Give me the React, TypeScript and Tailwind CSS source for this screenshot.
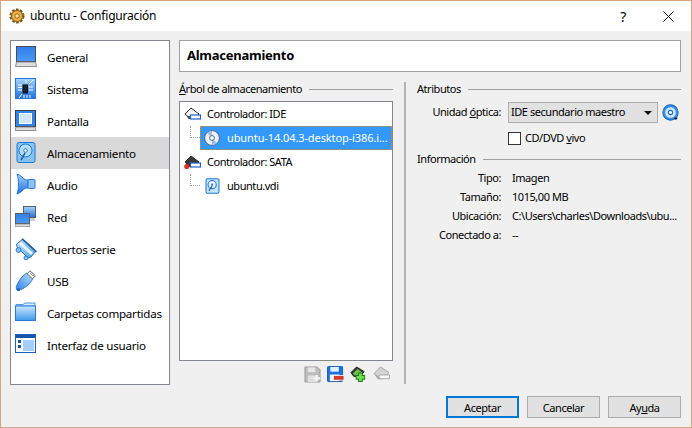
import type { ReactNode } from "react";

const FONT = "font-['Noto_Sans','Open_Sans',sans-serif]";

function Defs() {
  return (
    <svg width="0" height="0" className="absolute">
      <defs>
        <linearGradient id="blue" x1="0" y1="0" x2="0" y2="1">
          <stop offset="0" stopColor="#a6d4fa" />
          <stop offset="1" stopColor="#1f6fdc" />
        </linearGradient>
        <linearGradient id="screen" x1="0" y1="0" x2="0" y2="1">
          <stop offset="0" stopColor="#2f7fe8" />
          <stop offset="1" stopColor="#4a9af4" />
        </linearGradient>
        <linearGradient id="folder" x1="0" y1="0" x2="0" y2="1">
          <stop offset="0" stopColor="#cbe8fc" />
          <stop offset="1" stopColor="#3f97ea" />
        </linearGradient>
        <linearGradient id="usb" x1="0" y1="1" x2="1" y2="0">
          <stop offset="0" stopColor="#2a80e4" />
          <stop offset="1" stopColor="#bfe2fb" />
        </linearGradient>
        <linearGradient id="ctrl" x1="0" y1="0" x2="1" y2="1">
          <stop offset="0" stopColor="#cde8fc" />
          <stop offset="1" stopColor="#4a9ff0" />
        </linearGradient>
      </defs>
    </svg>
  );
}

function Icon({ children }: { children: ReactNode }) {
  return (
    <svg width="22" height="22" viewBox="0 0 22 22" className="shrink-0">
      {children}
    </svg>
  );
}

const GeneralIcon = () => (
  <Icon>
    <rect x="1.5" y="0.5" width="19" height="15" fill="url(#screen)" stroke="#4a4e58" />
    <path d="M1.5 16h19l1 4.5H.5z" fill="#dedede" stroke="#7a7a7a" strokeWidth="0.8" />
  </Icon>
);

const SistemaIcon = () => (
  <Icon>
    <rect x="0.5" y="0.5" width="20" height="20" fill="url(#blue)" stroke="#2a78d8" />
    <rect x="8" y="7" width="4.5" height="8" fill="#1c2630" stroke="#0a0f18" />
    <path
      d="M3 7h4M3 9.5h4M3 12h4M14 9h4M14 12h4M14 6l4-4M9 17v3M12 17v3M15 17v3M7 16l-3 4M11 5V2"
      stroke="#fff"
      strokeWidth="1"
    />
  </Icon>
);

const PantallaIcon = () => (
  <Icon>
    <rect x="0.5" y="0.5" width="20" height="16" fill="#3384ea" stroke="#3a3e48" />
    <rect x="4.5" y="3.5" width="12" height="10" fill="#cfe6fb" stroke="#fff" />
    <path d="M1 17h19l1 3.5H0z" fill="#dcdcdc" stroke="#7a7a7a" strokeWidth="0.8" />
  </Icon>
);

const DiskIcon = () => (
  <Icon>
    <rect x="2" y="0.5" width="18" height="20" rx="2" fill="#86c3f2" stroke="#1d7ad6" />
    <circle cx="10.5" cy="8.5" r="6.5" fill="#b6dcf8" stroke="#1d7ad6" />
    <circle cx="10.5" cy="8.5" r="1.8" fill="#fff" stroke="#1d7ad6" />
    <path d="M10 11l-4 7" stroke="#1d5fae" strokeWidth="1.6" />
  </Icon>
);

const AudioIcon = () => (
  <Icon>
    <path d="M2 0c4 1 6 5 9 6h2v8h-2c-3 1-5 5-9 6 2-6 2-14 0-20z" fill="url(#blue)" stroke="#2a78d8" />
    <rect x="13" y="5.5" width="7" height="9" rx="1" fill="#8cc4f8" stroke="#2a78d8" />
  </Icon>
);

const RedIcon = () => (
  <Icon>
    <rect x="8.5" y="0.5" width="12" height="11" fill="url(#blue)" stroke="#5a5e68" />
    <path d="M10 12h10v3H10z" fill="#d0d0d0" />
    <rect x="0.5" y="7.5" width="14" height="10" fill="url(#screen)" stroke="#5a5e68" />
    <path d="M.5 18h14l.5 2.5H0z" fill="#dcdcdc" stroke="#777" strokeWidth="0.6" />
  </Icon>
);

const SerieIcon = () => (
  <Icon>
    <path d="M8 1l13 12-5 6-3 1L2 9 1.5 6z" fill="url(#ctrl)" stroke="#3f6f9f" />
    <path d="M5 5l12 11" stroke="#e6f4ff" strokeWidth="3" />
    <path d="M7 0.8l14.5 13" stroke="#2d5f98" strokeWidth="1.6" />
    <circle cx="3.5" cy="12" r="2.4" fill="#8cc4f8" stroke="#2a78d8" />
    <circle cx="11" cy="20" r="2" fill="#8cc4f8" stroke="#2a78d8" />
  </Icon>
);

const UsbIcon = () => (
  <Icon>
    <path d="M12 3l6 5c-1 3-5 8-11 11-2 1-4 2-5 1s-1-3 0-5c2-5 6-10 10-12z" fill="url(#usb)" stroke="#2a78d8" />
    <path d="M15 0.8l5.5 5-3 3-5.5-5z" fill="#f6f6f6" stroke="#6a6a6a" />
    <path d="M15.5 3.5l1 1M17.5 5l1 1" stroke="#555" />
    <circle cx="3.5" cy="19.5" r="1.5" fill="#1f5fb8" />
  </Icon>
);

const FolderIcon = () => (
  <Icon>
    <path d="M1 4V2.5h7L10 1h10v3z" fill="#d6ecfb" stroke="#4a9be0" />
    <rect x="0.5" y="4" width="20" height="14.5" fill="url(#folder)" stroke="#2a78d8" />
  </Icon>
);

const InterfazIcon = () => (
  <Icon>
    <rect x="0.5" y="0.5" width="20" height="18" fill="#fff" stroke="#2060b8" />
    <rect x="1" y="1" width="19" height="3" fill="#1454ad" />
    <rect x="3" y="6" width="3" height="3" fill="#1454ad" />
    <rect x="3" y="11" width="3" height="3" fill="#1454ad" />
    <rect x="8" y="6" width="11" height="11" fill="#a6cdfb" />
  </Icon>
);

const CdIcon = () => (
  <svg width="16" height="16" viewBox="0 0 16 16" className="shrink-0">
    <circle cx="8" cy="8" r="7.4" fill="#eef2f6" stroke="#4f6a88" />
    <path d="M8 8L3 3a7 7 0 0 1 5-2zM8 8l5 5a7 7 0 0 1-5 2z" fill="#9dbfe2" />
    <circle cx="8" cy="8" r="2.4" fill="#fff" stroke="#4f6a88" />
  </svg>
);

const ControllerIcon = ({ sata = false }: { sata?: boolean }) => (
  <svg width="17" height="15" viewBox="0 0 17 15" className="shrink-0">
    <path d="M1 7l6-6 8 6-3 3H4z" fill={sata ? "#3a3a3a" : "#f4f4f4"} stroke="#2a2a2a" />
    <path d="M1 7l3.5 5H9V9H4z" fill={sata ? "#222" : "#555"} />
    {sata && <circle cx="2.8" cy="11.5" r="2.6" fill="#e03020" />}
    <rect x="6.5" y="8" width="10" height="4" fill="#fff" stroke="#1464c8" strokeWidth="1.2" />
  </svg>
);

const ToolIconAddDisk = () => (
  <svg width="17" height="17" viewBox="0 0 18 18" className="shrink-0">
    <path d="M1 1h13l3 3v13H1z" fill="#bcbcbc" stroke="#9a9a9a" />
    <rect x="4" y="1.5" width="8" height="5" fill="#e6e6e6" />
    <rect x="4" y="10" width="9" height="7" fill="#dedede" />
    <path d="M10 13h7M13.5 9.5v7" stroke="#f4f4f4" strokeWidth="2.4" />
  </svg>
);

const ToolIconRemDisk = () => (
  <svg width="17" height="17" viewBox="0 0 18 18" className="shrink-0">
    <rect x="0.5" y="0.5" width="16" height="16" rx="1" fill="#1f6fdc" stroke="#135bb8" />
    <rect x="3.5" y="1" width="9" height="5" fill="#dff0ff" />
    <rect x="3" y="9" width="10" height="7" fill="#eef6ff" />
    <rect x="7" y="10" width="11" height="5" fill="#d83a2a" stroke="#fff" strokeWidth="0.8" />
  </svg>
);

const ToolIconAddCtrl = () => (
  <svg width="17" height="17" viewBox="0 0 18 18" className="shrink-0">
    <path d="M1 7l6-6 8 5-4 5H4z" fill="#2f2f2f" stroke="#222" />
    <path d="M3 8l5-5 5 4-3 3H5z" fill="#6bc04b" />
    <path d="M6 12h10M11 7v10" stroke="#1e7a1e" strokeWidth="5" />
    <path d="M7 12h8M11 8v8" stroke="#6ee04a" strokeWidth="3" />
  </svg>
);

const ToolIconRemCtrl = () => (
  <svg width="17" height="17" viewBox="0 0 18 18" className="shrink-0">
    <path d="M1 8l7-7 9 6-4 4H5z" fill="#d4d4d4" stroke="#a0a0a0" />
    <path d="M1 8l4 6h5v-3H5z" fill="#aaa" />
    <rect x="6.5" y="9.5" width="11" height="4" fill="#f6f6f6" stroke="#a8a8a8" />
  </svg>
);

const NAV = [
  { label: "General", icon: <GeneralIcon /> },
  { label: "Sistema", icon: <SistemaIcon /> },
  { label: "Pantalla", icon: <PantallaIcon /> },
  { label: "Almacenamiento", icon: <DiskIcon />, active: true },
  { label: "Audio", icon: <AudioIcon /> },
  { label: "Red", icon: <RedIcon /> },
  { label: "Puertos serie", icon: <SerieIcon /> },
  { label: "USB", icon: <UsbIcon /> },
  { label: "Carpetas compartidas", icon: <FolderIcon /> },
  { label: "Interfaz de usuario", icon: <InterfazIcon /> },
];

const INFO = [
  ["Tipo:", "Imagen"],
  ["Tamaño:", "1015,00 MB"],
  ["Ubicación:", "C:\\Users\\charles\\Downloads\\ubu..."],
  ["Conectado a:", "--"],
];

function GroupTitle({ children }: { children: ReactNode }) {
  return (
    <div className="flex items-center gap-[7px] h-4">
      <span className="whitespace-nowrap">{children}</span>
      <div className="flex-1 h-px bg-[#a0a0a0]" />
    </div>
  );
}

function DialogButton({ children, primary = false }: { children: ReactNode; primary?: boolean }) {
  return (
    <button
      className={
        primary
          ? "w-[73px] h-[22px] bg-[#e1e1e1] border-2 border-[#0078d7] leading-none"
          : "w-[73px] h-[22px] bg-[#e1e1e1] border border-[#adadad] leading-none"
      }
    >
      {children}
    </button>
  );
}

export default function App() {
  return (
    <div
      className={`${FONT} w-[692px] h-[428px] flex flex-col bg-[#f0f0f0] border border-[#dba27e] text-[11px] text-black overflow-hidden tracking-[-0.45px]`}
    >
      <Defs />
      <header className="h-[30px] shrink-0 bg-white flex items-center pl-[8px] pr-[15px]">
        <svg width="16" height="16" viewBox="0 0 16 16" className="shrink-0">
          <circle cx="8" cy="8" r="6" fill="#e0a030" stroke="#7a5518" strokeWidth="3" strokeDasharray="2.4 1.4" />
          <circle cx="8" cy="8" r="5.5" fill="#eeb040" stroke="#8a6020" />
          <circle cx="8" cy="8" r="2.2" fill="#fbe6a8" stroke="#8a6020" />
        </svg>
        <span className="ml-[5px] text-[12px] tracking-[-0.2px]">ubuntu - Configuración</span>
        <span className="ml-auto text-[14px] mr-[37px]">?</span>
        <svg width="11" height="11" viewBox="0 0 11 11" className="mr-[2px]">
          <path d="M0.5 0.5l10 10M10.5 0.5l-10 10" stroke="#111" fill="none" />
        </svg>
      </header>

      <main className="flex-1 flex gap-[9px] pl-[9px] pr-[10px] pt-[9px] min-h-0">
        <nav className="w-[160px] h-[345px] shrink-0 bg-white border border-[#828790]">
          {NAV.map((item) => (
            <div
              key={item.label}
              className={`h-[32px] flex items-center gap-[10px] pl-[4px] whitespace-nowrap text-[11.6px] tracking-[-0.25px] ${item.active ? "bg-[#d9d9d9]" : ""}`}
            >
              {item.icon}
              <span className="pt-[2px]">{item.label}</span>
            </div>
          ))}
        </nav>

        <section className="flex-1 flex flex-col min-w-0">
          <div className="h-[32px] shrink-0 bg-white border border-[#a0a0a0] flex items-center pl-[7px] font-bold text-[13px] tracking-[-0.25px]">
            Almacenamiento
          </div>
          <div className="flex mt-[9px]">
            <div className="w-[214px] shrink-0 flex flex-col">
              <GroupTitle>
                <span className="underline">Á</span>rbol de almacenamiento
              </GroupTitle>
              <div className="h-[260px] mt-[4px] bg-white border border-[#828790]">
                <div className="h-[24px] flex items-center pl-[4px] gap-[6px]">
                  <ControllerIcon />
                  <span>Controlador: IDE</span>
                </div>
                <div className="h-[24px] flex items-center pl-[10px]">
                  <div className="w-[10px] h-[12px] mb-[12px] border-l border-b border-dotted border-[#999]" />
                  <div className="flex-1 h-[24px] bg-[#3399ff] text-white flex items-center pl-[3px] gap-[7px] border border-dotted border-[#e08a30] tracking-[-0.1px]">
                    <CdIcon />
                    <span className="whitespace-nowrap">ubuntu-14.04.3-desktop-i386.i...</span>
                  </div>
                </div>
                <div className="h-[24px] flex items-center pl-[4px] gap-[6px]">
                  <ControllerIcon sata />
                  <span>Controlador: SATA</span>
                </div>
                <div className="h-[24px] flex items-center pl-[10px]">
                  <div className="w-[10px] h-[12px] mb-[12px] border-l border-b border-dotted border-[#999]" />
                  <div className="flex items-center pl-[5px] gap-[7px]">
                    <svg width="15" height="16" viewBox="0 0 22 22">
                      <rect x="1.5" y="0.5" width="19" height="21" rx="2" fill="#c6e2f8" stroke="#1d7ad6" strokeWidth="1.5" />
                      <circle cx="10.5" cy="9" r="6" fill="#e6f3fd" stroke="#1d7ad6" strokeWidth="1.5" />
                      <circle cx="10.5" cy="9" r="1.6" fill="#1d7ad6" />
                      <path d="M10 11l-4 7" stroke="#1d5fae" strokeWidth="2" />
                    </svg>
                    <span>ubuntu.vdi</span>
                  </div>
                </div>
              </div>
              <div className="flex justify-end items-center gap-[6px] h-[17px] mt-[5px] pr-[3px]">
                <ToolIconAddDisk />
                <ToolIconRemDisk />
                <ToolIconAddCtrl />
                <ToolIconRemCtrl />
              </div>
            </div>

            <div className="w-[2px] h-[302px] shrink-0 ml-[11px] mt-[1px] bg-[#b4b4b4]" />

            <div className="flex-1 pl-[11px] min-w-0">
              <GroupTitle>Atributos</GroupTitle>
              <div className="flex items-center mt-[5px] h-[21px]">
                <span className="w-[84px] shrink-0 text-right whitespace-nowrap">
                  Unidad <span className="underline">ó</span>ptica:
                </span>
                <div className="ml-[7px] w-[150px] h-[21px] shrink-0 bg-[#e1e1e1] border border-[#adadad] flex items-center pl-[2px] pr-[5px] justify-between">
                  <span className="whitespace-nowrap">IDE secundario maestro</span>
                  <svg width="8" height="4" viewBox="0 0 8 4">
                    <path d="M0 0h8L4 4z" fill="#111" />
                  </svg>
                </div>
                <div className="ml-[4px] relative">
                  <svg width="17" height="17" viewBox="0 0 16 16" className="shrink-0">
                    <circle cx="8" cy="8" r="7.2" fill="#3a92e4" stroke="#1f6cc0" />
                    <circle cx="8" cy="8" r="5" fill="#cfe6fb" />
                    <circle cx="8" cy="8" r="2" fill="#fff" stroke="#1f6cc0" />
                    <path d="M11 13h4l-2 2z" fill="#111" />
                  </svg>
                </div>
              </div>
              <div className="flex items-center mt-[9px] ml-[91px] h-[12px]">
                <div className="w-[13px] h-[13px] shrink-0 bg-white border border-[#333]" />
                <span className="ml-[4px]">
                  CD/DVD <span className="underline">v</span>ivo
                </span>
              </div>
              <div className="mt-[7px]">
                <GroupTitle>Información</GroupTitle>
              </div>
              <div className="mt-[2px] flex flex-col">
                {INFO.map(([label, value]) => (
                  <div key={label} className="h-[19px] flex items-center">
                    <span className="w-[84px] shrink-0 text-right whitespace-nowrap">{label}</span>
                    <span className="ml-[11px] whitespace-nowrap">{value}</span>
                  </div>
                ))}
              </div>
            </div>
          </div>
        </section>
      </main>

      <footer className="h-[42px] shrink-0 flex justify-end items-start gap-[8px] pr-[10px] pt-[11px]">
        <DialogButton primary>Aceptar</DialogButton>
        <DialogButton>Cancelar</DialogButton>
        <DialogButton>
          Ay<span className="underline">u</span>da
        </DialogButton>
      </footer>
    </div>
  );
}
